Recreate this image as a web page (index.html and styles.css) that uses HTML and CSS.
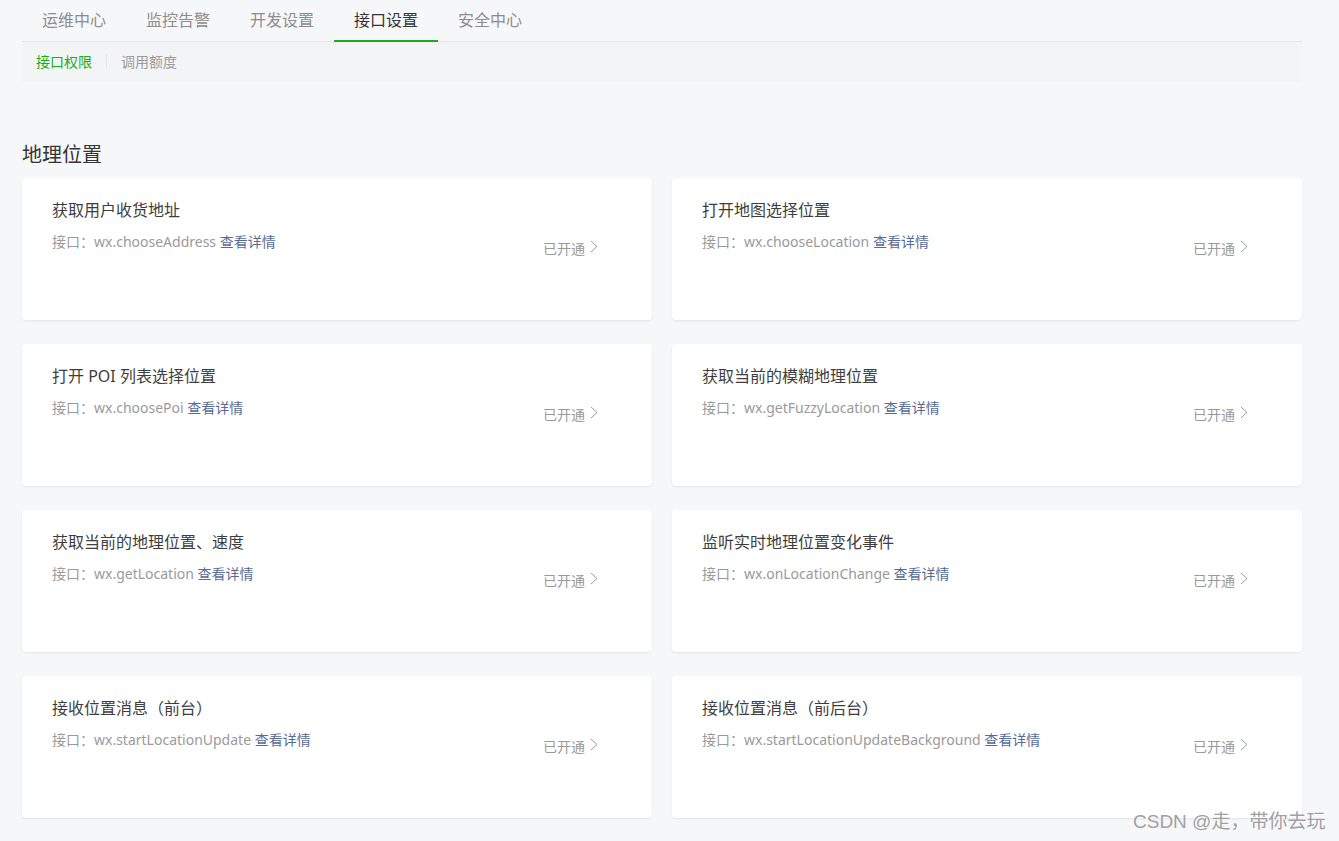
FILE: index.html
```html
<!DOCTYPE html>
<html lang="zh-CN">
<head>
<meta charset="utf-8">
<title>接口设置</title>
<link rel="stylesheet" href="styles.css">
</head>
<body>
<div class="page">
  <nav class="tabs">
    <a class="tab">运维中心</a>
    <a class="tab">监控告警</a>
    <a class="tab">开发设置</a>
    <a class="tab active">接口设置</a>
    <a class="tab">安全中心</a>
  </nav>
  <div class="subnav">
    <a class="sub active">接口权限</a>
    <span class="sep"></span>
    <a class="sub">调用额度</a>
  </div>
  <h2 class="section-title">地理位置</h2>
  <div class="grid">
    <div class="card">
      <div class="info">
        <div class="title">获取用户收货地址</div>
        <div class="desc">接口：wx.chooseAddress <a class="link">查看详情</a></div>
      </div>
      <div class="status">已开通<svg class="chev" viewBox="0 0 8 13" width="8" height="13"><path d="M1 1l6 5.5L1 12" fill="none" stroke="#9a9a9a" stroke-width="1"/></svg></div>
    </div>
    <div class="card">
      <div class="info">
        <div class="title">打开地图选择位置</div>
        <div class="desc">接口：wx.chooseLocation <a class="link">查看详情</a></div>
      </div>
      <div class="status">已开通<svg class="chev" viewBox="0 0 8 13" width="8" height="13"><path d="M1 1l6 5.5L1 12" fill="none" stroke="#9a9a9a" stroke-width="1"/></svg></div>
    </div>
    <div class="card">
      <div class="info">
        <div class="title">打开 POI 列表选择位置</div>
        <div class="desc">接口：wx.choosePoi <a class="link">查看详情</a></div>
      </div>
      <div class="status">已开通<svg class="chev" viewBox="0 0 8 13" width="8" height="13"><path d="M1 1l6 5.5L1 12" fill="none" stroke="#9a9a9a" stroke-width="1"/></svg></div>
    </div>
    <div class="card">
      <div class="info">
        <div class="title">获取当前的模糊地理位置</div>
        <div class="desc">接口：wx.getFuzzyLocation <a class="link">查看详情</a></div>
      </div>
      <div class="status">已开通<svg class="chev" viewBox="0 0 8 13" width="8" height="13"><path d="M1 1l6 5.5L1 12" fill="none" stroke="#9a9a9a" stroke-width="1"/></svg></div>
    </div>
    <div class="card">
      <div class="info">
        <div class="title">获取当前的地理位置、速度</div>
        <div class="desc">接口：wx.getLocation <a class="link">查看详情</a></div>
      </div>
      <div class="status">已开通<svg class="chev" viewBox="0 0 8 13" width="8" height="13"><path d="M1 1l6 5.5L1 12" fill="none" stroke="#9a9a9a" stroke-width="1"/></svg></div>
    </div>
    <div class="card">
      <div class="info">
        <div class="title">监听实时地理位置变化事件</div>
        <div class="desc">接口：wx.onLocationChange <a class="link">查看详情</a></div>
      </div>
      <div class="status">已开通<svg class="chev" viewBox="0 0 8 13" width="8" height="13"><path d="M1 1l6 5.5L1 12" fill="none" stroke="#9a9a9a" stroke-width="1"/></svg></div>
    </div>
    <div class="card">
      <div class="info">
        <div class="title">接收位置消息（前台）</div>
        <div class="desc">接口：wx.startLocationUpdate <a class="link">查看详情</a></div>
      </div>
      <div class="status">已开通<svg class="chev" viewBox="0 0 8 13" width="8" height="13"><path d="M1 1l6 5.5L1 12" fill="none" stroke="#9a9a9a" stroke-width="1"/></svg></div>
    </div>
    <div class="card">
      <div class="info">
        <div class="title">接收位置消息（前后台）</div>
        <div class="desc">接口：wx.startLocationUpdateBackground <a class="link">查看详情</a></div>
      </div>
      <div class="status">已开通<svg class="chev" viewBox="0 0 8 13" width="8" height="13"><path d="M1 1l6 5.5L1 12" fill="none" stroke="#9a9a9a" stroke-width="1"/></svg></div>
    </div>
  </div>
</div>
<div class="watermark">CSDN @走，带你去玩</div>
</body>
</html>
```

FILE: styles.css
```css
html, body {
  margin: 0;
  padding: 0;
  background: #f6f7f9;
  height: 100%;
  overflow: hidden;
}
body {
  font-family: "Noto Sans", "Noto Sans CJK SC", sans-serif;
  color: #353535;
  position: relative;
}
.page {
  width: 1280px;
  margin-left: 22px;
}
.tabs {
  display: flex;
  height: 41px;
  border-bottom: 1px solid #e4e6eb;
}
.tab {
  width: 104px;
  box-sizing: border-box;
  text-align: center;
  font-size: 16px;
  line-height: 41px;
  color: #8d8d8d;
  cursor: pointer;
}
.tab.active {
  color: #353535;
  box-shadow: inset 0 -2px 0 #1aad19;
  margin-bottom: -1px;
  height: 42px;
}
.subnav {
  display: flex;
  align-items: center;
  height: 40px;
  box-sizing: border-box;
  padding-bottom: 2px;
  background: #f3f4f6;
  padding-left: 14px;
}
.sub {
  font-size: 14px;
  color: #9a9a9a;
}
.sub.active {
  color: #1aad19;
}
.sep {
  width: 1px;
  height: 14px;
  background: #e4e6eb;
  margin: 0 14px;
}
.section-title {
  margin: 61px 0 0;
  font-size: 20px;
  font-weight: normal;
  line-height: 24px;
  height: 24px;
  color: #353535;
}
.grid {
  margin-top: 11px;
  display: grid;
  grid-template-columns: 630px 630px;
  column-gap: 20px;
  row-gap: 24px;
}
.card {
  background: #fff;
  border-radius: 4px;
  box-shadow: 0 1px 2px rgba(0, 0, 0, 0.08);
  height: 142px;
  box-sizing: border-box;
  padding: 20px 54px 0 30px;
  display: flex;
  justify-content: space-between;
}
.title {
  font-size: 16px;
  line-height: 24px;
  color: #3e3e3e;
}
.desc {
  margin-top: 8px;
  font-size: 14px;
  line-height: 24px;
  color: #9a9a9a;
}
.link {
  color: #576b95;
}
.status {
  display: flex;
  align-items: center;
  font-size: 14px;
  color: #9a9a9a;
  height: 24px;
  margin-top: 38px;
}
.chev {
  margin-left: 5px;
  margin-top: -3px;
}
.watermark {
  position: absolute;
  left: 1133px;
  top: 810px;
  font-size: 19px;
  line-height: 24px;
  color: #a0a0a0;
  text-shadow: 0 0 2px #fff;
  white-space: nowrap;
  font-family: "Liberation Sans", "Noto Sans CJK SC", sans-serif;
}
```
